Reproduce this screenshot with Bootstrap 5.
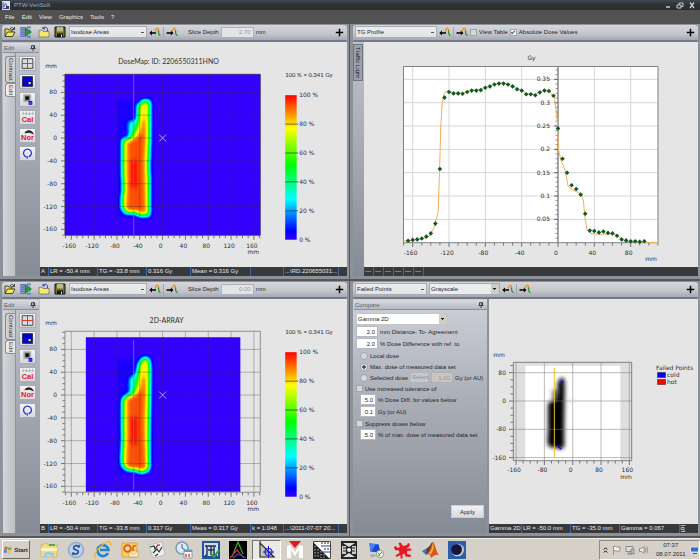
<!DOCTYPE html>
<html lang="en">
<head>
<meta charset="utf-8">
<meta name="viewport" content="width=device-width, initial-scale=1">
<title>PTW-VeriSoft</title>
<link href="https://cdn.jsdelivr.net/npm/bootstrap@5.3.0/dist/css/bootstrap.min.css" rel="stylesheet">
<style>
:root{--ui:"Liberation Sans",Arial,sans-serif;--plot:"DejaVu Sans",Verdana,sans-serif;--geo:Lato,"Century Gothic",sans-serif}
body{font:6px/10px var(--ui);color:#25262b;background:#595b5e}
svg{display:block}
button,select,input{font:inherit;color:inherit}
.title-bar{height:10px;background:linear-gradient(#3f4857,#303234 45%,#2c2d2f);color:#8fb0d0;padding:0 4px 0 2px}
.win-btn{width:8px;height:8px;color:#c6cbd2}
.menu-bar{height:14px;background:#525252;padding:0 5px;gap:7px}
.menu-bar a{color:#e8e8e8;text-decoration:none}
.panes{display:grid;grid-template-columns:1fr 1fr;grid-auto-rows:1fr}
.pane{background:#8d9299;border-bottom:2px solid #55575b;min-width:0}
.pane-l{padding:1px 2px 3px 2px;border-right:1px solid #55575b}
.pane-r{padding:1px 2px 3px 3px}
.tool-row{height:17px;padding:0 3px 1px 2px;border-radius:3px 3px 2px 2px;border-bottom:2px solid #747a85;background:linear-gradient(#d5d7dc,#c3c5cb 60%,#a5a9b3)}
.tool-row .btn,.win-btn,.tool-side .btn,.task .btn{border-radius:0;line-height:1}
.tool-gap{gap:2px}
.files{gap:4px;margin-right:1px}
.files .btn:nth-child(3){margin-left:2px}
.pick{appearance:none;border:1px solid #a9acb2;border-radius:0;height:12px;line-height:8px;padding:0 8px 0 1px;min-width:0;outline:0;
 background:linear-gradient(#55585e,#55585e) right 2px center/3px 1px no-repeat,linear-gradient(#ececec,#e3e3e5)}
.pick-solid{background:linear-gradient(#222,#222) right 3px top 4px/3px 1px no-repeat,linear-gradient(#222,#222) right 4px top 5px/1px 1px no-repeat,linear-gradient(#d0cdc5,#d0cdc5) right/8px 100% no-repeat,#ececee}
.pick-white{background-color:#fff;border-color:#c3c5ca;margin-bottom:1px}
.num{border:1px solid #b4b8bf;border-radius:0;padding:0 2px;text-align:right;height:11px;background:#fff;line-height:9px;min-width:0}
.num:disabled{background:#e4e4e6;color:#96989d;border-color:#aeb1b8}
.w-iso{width:78px}.w-tg{width:82px}.w-fail{width:72px}.w-gray{width:71px}.w-gamma{width:92px}
.w-depth{width:33px}.w-two{width:22px}.w-five{width:16px}
.slice{margin-left:8px}
.divider{width:1px;height:11px;background:#a2a5ac}
.plus{width:9px;height:9px}
.side-head{height:10px;margin:1px 1px 0 1px;padding:0 3px 0 1px;color:#5c616a;border-bottom:1px solid #8b9099;background:linear-gradient(#d9dbe0,#b5b9c2)}
.side{width:38px;flex:none;background:linear-gradient(#c5c7cf,#a3a8b2 45%,#868c96)}
.tab-strip{width:13px;margin-left:1px;background:linear-gradient(90deg,#d4d5d8,#bfc0c4);border-right:1px solid #8f939a;padding-top:3px}
.vtab{writing-mode:vertical-rl;border:1px solid #888c94;border-right:0;border-radius:3px 0 0 3px;background:#cfd0d4;color:#333;line-height:9px;padding:1px 0;width:10px;margin-left:2px}
.vtab.on{background:#ededee}
.tool-side{padding:3px 0 0 3px;gap:3px}
.tool-side .btn{width:17px;height:15px;padding:0;background:linear-gradient(#f4f4f5,#d6d8dc);border:1px solid #a7abb3;border-radius:1px}
.light-strip{width:11px;flex:none;background:linear-gradient(#c0c3cb,#858b95)}
.light-strip button{writing-mode:vertical-rl;border:1px solid #6f757f;background:#9ba1ac;line-height:8px;width:10px;padding:2px 0;margin-top:2px}
.sheet{background:#e5e5e5;min-width:0}
.sheet svg text{font:6px var(--plot);fill:#303030}
.sheet svg .geo{font:7px var(--geo)}
.sheet svg .geo-s{font:6px var(--geo)}
.status{height:9px;background:#37393d;color:#e6e8ea;line-height:9px;white-space:nowrap;overflow:hidden;flex:none}
.status span{border-right:1px solid #3a66a8;padding-left:1px;overflow:hidden;flex:none}
.c-id{width:9px}.c-val{width:49px}.c-dose{width:44px}.c-mean{width:60px}.c-k{width:33px}.c-file{width:55px}.c-dash{width:10px}.c-gam{width:33px}.c-gv{width:60px}
.compare{width:134px;flex:none;background:linear-gradient(#cdd0d7,#a9adb6 45%,#858b95);margin-right:2px}
.compare .side-head{margin-right:0}
.fields{padding:3px 3px 0 3px}
.line{height:11px;gap:2px;white-space:nowrap}
.line-in{height:11px;gap:2px;white-space:nowrap;margin-bottom:1px}
.tick{appearance:none;width:7px;height:7px;border:1px solid #9fa3aa;background:#d6d8dc;margin:0;flex:none;display:grid;place-items:center}
.tick:checked{background:#f1f2f4}
.tick[type=checkbox]:checked::after{content:"";width:2px;height:4px;border:solid #2f4f7c;border-width:0 1px 1px 0;transform:rotate(45deg)}
.tick[type=radio]{border-radius:50%;width:8px;height:8px}
.tick[type=radio]:checked{background:radial-gradient(#33506e 0 35%,#eceef1 45%)}
.indent{padding-left:4px}
.sel-btn{border:1px solid #b0b4bb;background:#c6c8cd;color:#8f939a;padding:0 1px;line-height:9px;width:19px}
.line .num{background:#c9c5be;width:22px}
.apply{width:33px;height:13px;border:1px solid #c9ccd2;background:linear-gradient(#f1f2f4,#d7dade);padding:0;margin:0 3px 15px auto;line-height:10px}
.task{height:22px;background:#d5d1c8;border-top:1px solid #efeee9;padding-left:2px;flex:none}
.start{width:28px;height:19px;border:1px solid;border-color:#fff #6d6a64 #6d6a64 #fff;background:#d5d1c8;font-weight:700;padding:0;gap:2px}
.launch{flex:0 1 436px;margin-left:5px}
.launch .btn{flex:1 1 0;height:20px;padding:0;border:0}
.launch .btn.on{border:1px solid;border-color:#77746e #fff #fff #77746e;background:#ebe9e4}
.tray{border:1px solid;border-color:#8f8c85 #fff #fff #8f8c85;height:20px;padding:0 0 0 3px;width:101px;gap:4px;line-height:9px}
</style>
<script src="https://cdn.jsdelivr.net/npm/bootstrap@5.3.0/dist/js/bootstrap.bundle.min.js"></script>
</head>
<body class="d-flex flex-column min-vh-100">

<svg width="0" height="0" class="position-absolute" aria-hidden="true">
<defs>
<filter id="jet" filterUnits="userSpaceOnUse" x="50" y="60" width="230" height="190" color-interpolation-filters="sRGB">
<feGaussianBlur stdDeviation="2"/>
<feComponentTransfer>
<feFuncR type="table" tableValues=".2 0 0 0 0 0 0 0 0 0 .05 .25 .5 .72 .9 1 1 1 1 1 1"/>
<feFuncG type="table" tableValues="0 0 .25 .5 .8 1 1 1 1 1 1 1 1 1 1 .95 .75 .55 .38 .2 0"/>
<feFuncB type="table" tableValues="1 1 1 1 1 1 .8 .6 .4 .2 0 0 0 0 0 0 0 0 0 0 0"/>
</feComponentTransfer>
</filter>
<filter id="soft" filterUnits="userSpaceOnUse" x="100" y="60" width="90" height="190"><feGaussianBlur stdDeviation="3.2"/></filter>
<linearGradient id="scale" x1="0" y1="1" x2="0" y2="0"><stop offset="0" stop-color="#3200ff"/><stop offset=".06" stop-color="#00f"/><stop offset=".28" stop-color="#0ff"/><stop offset=".52" stop-color="#0f0"/><stop offset=".77" stop-color="#ff0"/><stop offset="1" stop-color="#f00"/></linearGradient>
<path id="stepped" d="M138.500 107V104H142V100.500H150V145H149.500V158H149V174H149.500V216H138V213H125V210H122.500V195H123.500V178H123V158H123V139H131V136H134V132H136V128H138V116H138.500Z"/>
<path id="smooth" d="M138.500 112C140 104 143 100 147 100.500 151 102 150 112 150 130 149.500 160 149 180 149.500 211 147 217 139 217 136 213 131 214 126 213 123 209 121 200 124 190 123 172L123 145C124 136 131 140 133.500 136 136 132 138 128 138 118Z"/>
<path id="core" d="M143 120H145.500V140L144.500 158L145 184L146 212H127L128 184V142L134 139L139 136L142 130Z"/>
<symbol id="i-open" viewBox="0 0 12 12"><path d="M1 10V3h3l1 1h3v2" fill="#e8dc63" stroke="#222" stroke-width=".8"/><path d="M1 10.500 3.500 6H11L8.500 10.500Z" fill="#f4ea54" stroke="#222" stroke-width=".8"/><path d="M6 3c1-2 3-2 4 0M10.500 1v2.500H8" fill="none" stroke="#222" stroke-width=".8"/></symbol>
<symbol id="i-run" viewBox="0 0 12 12"><path d="M.5 1h10v10H.5z" fill="#9fabd8"/><path d="M1 1v10M3 1v10M5 1v10M7 1h4M7 11h4" stroke="#2a3aa0" stroke-dasharray="1.500 .7"/><path d="M5.500 2 11.500 6 5.500 10Z" fill="#1fa52c" stroke="#0a5c12" stroke-width=".5"/></symbol>
<symbol id="i-folder" viewBox="0 0 12 12"><path d="M1 11V4.500L4 4l1 1.500h6V11Z" fill="#f5e96a" stroke="#666" stroke-width=".7"/><path d="M5 2.500C7 0 10 1 9.500 5M5 .8v2h2" fill="none" stroke="#253a9c"/></symbol>
<symbol id="i-save" viewBox="0 0 12 12"><path d="M1 1h10v10H1z" fill="#77751c" stroke="#111"/><path d="M3 1h6v4.500H3z" fill="#b9bc8a"/><path d="M3 7.500h6V11H3z" fill="#151515"/><path d="M7 8.500h1V11H7z" fill="#ddd"/></symbol>
<symbol id="i-prev" viewBox="0 0 12 10"><path d="M.3 6 3 3.500V5.300H7V6.700H3V8.500Z" fill="#000"/><path d="M6 4.500C7.500 0 9.500 0 9.500 4" fill="none" stroke="#e6942a" stroke-width="1.300"/><path d="M9.500 3.500C9.500 7 10 8.500 11.500 8.500" fill="none" stroke="#31902c" stroke-width="1.300"/></symbol>
<symbol id="i-next" viewBox="0 0 12 10"><path d="M7.500 6 4.800 3.500V5.300H.5V6.700H4.800V8.500Z" fill="#000"/><path d="M6 4.500C7.500 0 9.500 0 9.500 4" fill="none" stroke="#e6942a" stroke-width="1.300"/><path d="M9.500 3.500C9.500 7 10 8.500 11.500 8.500" fill="none" stroke="#31902c" stroke-width="1.300"/></symbol>
<symbol id="i-pin" viewBox="0 0 6 6"><path d="M1.500.7h3V3.300M1.500.7V3.300M.5 3.500h5M3 3.500V6" fill="none" stroke="#222" stroke-width=".8"/><path d="M3.500.7h1v2.600h-1z" fill="#222"/></symbol>
<symbol id="i-plus" viewBox="0 0 8 8"><path d="M4 .7V7.300M.7 4H7.300" stroke="#000" stroke-width="1.300"/></symbol>
<symbol id="s-grid" viewBox="0 0 14 12"><path d="M2 1.500h10v9H2z" fill="#ddd" stroke="#444" stroke-width=".9"/><path d="M7 1.500v9M2 6h10" stroke="#e03030" stroke-width=".9"/></symbol>
<symbol id="s-blue" viewBox="0 0 14 12"><path d="M2.500 1.500h9v9h-9z" fill="#0000d8" stroke="#224"/><path d="M8 6.500h2v2H8z" fill="#ffe94a"/></symbol>
<symbol id="s-spot" viewBox="0 0 14 12"><path d="M3 1h7.500v7.500H3z" fill="#b4b4b4"/><path d="M4.500 2.500h4.500v4.500h-4.500z" fill="#555"/><path d="M5.500 3.500h2.500v2.500h-2.500z" fill="#000"/><path d="M8.500 8h2.500v2.500H8.500z" fill="#66f" stroke="#11d"/></symbol>
<symbol id="s-cal" viewBox="0 0 14 12"><path d="M3 .5v3M6 .5v3M9 .5v3M12 .5v3M2 2.500h11" stroke="#888" stroke-width=".5"/><text x="7" y="10.500" text-anchor="middle" style="font:bold 7px 'Liberation Sans',sans-serif" fill="#e8141c">Cal</text></symbol>
<symbol id="s-nor" viewBox="0 0 14 12"><path d="M4 4C6 0 11 0 13 5L9 3.500Z" fill="#222"/><text x="7" y="10.500" text-anchor="middle" style="font:bold 7px 'Liberation Sans',sans-serif" fill="#e8141c">Nor</text></symbol>
<symbol id="s-turn" viewBox="0 0 14 12"><path d="M5.500 9A3.700 3.700 0 1 1 8.500 9" fill="none" stroke="#2632d8" stroke-width="1.200"/><path d="M4.500 9h2.300v2" fill="none" stroke="#2632d8"/><path d="M9.800 7.600 8.200 9.200" stroke="#2632d8"/></symbol>
</defs>
</svg>

<header>
<div class="title-bar d-flex align-items-center justify-content-between">
<div class="d-flex align-items-center gap-1">
<svg width="8" height="9" viewBox="0 0 8 9"><path d="M0 0h8v9H0z" fill="#dfe3f0"/><path d="M1 1v6.500h6M2 6C3 1 4 2 4.500 5L7 6" fill="none" stroke="#4450a0"/><path d="M4 5h3v3H4z" fill="#3a3a70"/></svg>
<span>PTW-VeriSoft</span>
</div>
<div class="d-flex gap-1">
<button class="btn win-btn p-0 border-0" aria-label="Minimize"><svg width="8" height="8"><path d="M2 6h4" stroke="currentColor" stroke-width="1.500"/></svg></button>
<button class="btn win-btn p-0 border-0" aria-label="Restore"><svg width="8" height="8"><path d="M1 4h4v3H1zM3 4V2h4v3.500H5" fill="none" stroke="currentColor"/></svg></button>
<button class="btn win-btn p-0 border-0" aria-label="Close"><svg width="8" height="8"><path d="M2 1.500 6 7M6 1.500 2 7" stroke="currentColor" stroke-width="1.300"/></svg></button>
</div>
</div>
<nav class="menu-bar d-flex align-items-center">
<a href="#">File</a><a href="#">Edit</a><a href="#">View</a><a href="#">Graphics</a><a href="#">Tools</a><a href="#">?</a>
</nav>
</header>

<main class="panes flex-grow-1">

<section class="pane pane-l d-flex flex-column" data-map="A"></section>

<section class="pane pane-r d-flex flex-column">
<div class="tool-row tool-gap d-flex align-items-center">
<select class="pick w-tg" aria-label="Profile"><option>TG Profile</option></select>
<button class="btn p-0 border-0" aria-label="Previous"><svg width="12" height="10"><use href="#i-prev"/></svg></button>
<span class="divider"></span>
<button class="btn p-0 border-0" aria-label="Next"><svg width="12" height="10"><use href="#i-next"/></svg></button>
<input class="tick" type="checkbox" id="vt"><label for="vt">View Table</label>
<input class="tick" type="checkbox" id="ab" checked><label for="ab">Absolute Dose Values</label>
<button class="btn p-0 border-0 ms-auto" aria-label="Add"><svg class="plus"><use href="#i-plus"/></svg></button>
</div>
<div class="d-flex flex-grow-1">
<div class="light-strip"><button>Traffic Light</button></div>
<div class="sheet d-flex flex-column flex-grow-1">
<svg id="profile" class="w-100 flex-grow-1" viewBox="364 42 334 225"></svg>
<div class="status d-flex"><span class="c-dash">---</span><span class="c-dash">---</span><span class="c-dash">---</span><span class="c-dash">---</span><span class="c-dash">---</span><span class="c-dash">---</span></div>
</div>
</div>
</section>

<section class="pane pane-l d-flex flex-column" data-map="B"></section>

<section class="pane pane-r d-flex flex-column">
<div class="tool-row tool-gap d-flex align-items-center">
<select class="pick w-fail" aria-label="View"><option>Failed Points</option></select>
<select class="pick pick-solid w-gray" aria-label="Palette"><option>Grayscale</option></select>
<button class="btn p-0 border-0" aria-label="Previous"><svg width="12" height="10"><use href="#i-prev"/></svg></button>
<span class="divider"></span>
<button class="btn p-0 border-0" aria-label="Next"><svg width="12" height="10"><use href="#i-next"/></svg></button>
<button class="btn p-0 border-0 ms-auto" aria-label="Add"><svg class="plus"><use href="#i-plus"/></svg></button>
</div>
<div class="d-flex flex-grow-1">
<form class="compare d-flex flex-column">
<div class="side-head d-flex align-items-center justify-content-between"><span>Compare</span><svg width="6" height="6"><use href="#i-pin"/></svg></div>
<div class="fields d-flex flex-column">
<select class="pick pick-solid pick-white w-gamma" aria-label="Method"><option>Gamma 2D</option></select>
<div class="line-in d-flex align-items-center"><input class="num w-two" id="f1" value="2.0"><label for="f1">mm Distance- To- Agreement</label></div>
<div class="line-in d-flex align-items-center"><input class="num w-two" id="f2" value="2.0"><label for="f2">% Dose Difference with ref. to</label></div>
<div class="line d-flex align-items-center indent"><input class="tick" type="radio" name="ref" id="r1"><label for="r1">Local dose</label></div>
<div class="line d-flex align-items-center indent"><input class="tick" type="radio" name="ref" id="r2" checked><label for="r2">Max. dose of measured data set</label></div>
<div class="line d-flex align-items-center indent"><input class="tick" type="radio" name="ref" id="r3"><label for="r3">Selected dose</label><button type="button" class="sel-btn" disabled>Select</button><input class="num" id="f3" value="1.00" disabled><label for="f3">Gy (or AU)</label></div>
<div class="line d-flex align-items-center"><input class="tick" type="checkbox" id="k1"><label for="k1">Use increased tolerance of</label></div>
<div class="line-in d-flex align-items-center indent"><input class="num w-five" id="f4" value="5.0"><label for="f4">% Dose Diff. for values below</label></div>
<div class="line-in d-flex align-items-center indent"><input class="num w-five" id="f5" value="0.1"><label for="f5">Gy (or AU)</label></div>
<div class="line d-flex align-items-center"><input class="tick" type="checkbox" id="k2"><label for="k2">Suppress doses below</label></div>
<div class="line-in d-flex align-items-center indent"><input class="num w-five" id="f6" value="5.0"><label for="f6">% of max. dose of measured data set</label></div>
</div>
<button type="button" class="apply mt-auto">Apply</button>
</form>
<div class="sheet d-flex flex-column flex-grow-1">
<svg id="gamma" class="w-100 flex-grow-1" viewBox="489 299 209 225"></svg>
<div class="status d-flex"><span class="c-gam">Gamma 2D</span><span class="c-val">LR = -50.0 mm</span><span class="c-val">TG = -35.0 mm</span><span class="c-gv">Gamma = 0.067</span><svg width="6" height="9" viewBox="0 0 6 9"><path d="M.5 1.500h5M1 3.500h3v2H1zM1 7.500h4L3 5.500" fill="none" stroke="#ccc" stroke-width=".8"/></svg></div>
</div>
</div>
</section>
</main>

<footer class="task d-flex align-items-center">
<button class="start d-flex align-items-center justify-content-center"><svg width="8" height="8" viewBox="0 0 8 8"><path d="M.8 1C2 .2 3 .5 3.700 1L3 3.800C2 3.200 1 3.300 0 3.900Z" fill="#e8562a"/><path d="M4.300 1.200C5.500 1.800 6.500 1.600 7.800 1L7 3.900C6 4.500 4.800 4.400 3.600 4Z" fill="#6fb43c"/><path d="M0 4.500C1 3.900 2 4 2.900 4.500L2.200 7.200C1.500 6.700.5 6.700-.5 7.200Z" fill="#3d83d6"/><path d="M3.400 4.700C4.500 5.200 5.500 5.200 6.800 4.600L6 7.400C5 7.900 3.700 7.900 2.700 7.400Z" fill="#f4c531"/></svg>Start</button>
<div class="launch d-flex align-items-center">
<button class="btn d-flex align-items-center justify-content-center" aria-label="Explorer"><svg width="18" height="18" viewBox="0 0 18 18"><path d="M1 4 7 2l1 2h9v12H1Z" fill="#f1dc85" stroke="#c4a94e" stroke-width=".6"/><path d="M9 3h6v2H9z" fill="#59a84e"/><path d="M1 7h16v3H1z" fill="#fff3bc"/><path d="M4 16v-4q5-3 10 0v4h-3v-2H7v2Z" fill="#9dcbea"/></svg></button>
<button class="btn d-flex align-items-center justify-content-center" aria-label="Sync"><svg width="18" height="18" viewBox="0 0 18 18"><circle cx="9" cy="9" r="7.800" fill="#a9bfe0" stroke="#8ba5d2"/><circle cx="9" cy="9" r="6" fill="#c3d2ea"/><path d="M12 5.500C9 3.500 5.500 5.500 7 8L11 9.800C12.500 12 9 14 6 12.500" fill="none" stroke="#264f9c" stroke-width="1.600"/><path d="M12.800 3.500v3.500l-3-1ZM5.200 14.500v-3.500l3 1Z" fill="#264f9c"/></svg></button>
<button class="btn d-flex align-items-center justify-content-center" aria-label="Internet Explorer"><svg width="18" height="18" viewBox="0 0 18 18"><path d="M14 12A5.500 5.500 0 1 1 14.500 9H6" fill="none" stroke="#1f83cf" stroke-width="2.600"/><path d="M2 16C-1 17 1 10 7 5S18-1 16 5" fill="none" stroke="#efb52b" stroke-width="1.300"/></svg></button>
<button class="btn d-flex align-items-center justify-content-center" aria-label="Outlook"><svg width="18" height="18" viewBox="0 0 18 18"><path d="M1 2h15v14H1z" fill="#f8d06a" stroke="#eaa235"/><path d="M8 10h9v6H8z" fill="#fff1c2" stroke="#d98a1c" stroke-width=".6"/><path d="m8 10 4.500 3.500L17 10" fill="none" stroke="#d98a1c" stroke-width=".6"/><circle cx="6.500" cy="7.500" r="3.300" fill="#fbe7b0" stroke="#d9600f" stroke-width="1.900"/><path d="M15 5q-3-1-3 2v3" fill="none" stroke="#d9600f" stroke-width="1.600"/></svg></button>
<button class="btn d-flex align-items-center justify-content-center" aria-label="Notes"><svg width="18" height="18" viewBox="0 0 18 18"><path d="m1 4 13-3 3 13-12 3Z" fill="#eee" stroke="#aaa" stroke-width=".6"/><path d="m2 6 4-1 1 3 3-4M5 12l4-4 2 3 3-5M7 15l3-2" fill="none" stroke="#333" stroke-width="1.200"/><path d="m9 4 3 0" stroke="#d33" stroke-width="1.300"/></svg></button>
<button class="btn d-flex align-items-center justify-content-center" aria-label="Schedule"><svg width="18" height="18" viewBox="0 0 18 18"><circle cx="7" cy="7" r="6" fill="#dce9f6" stroke="#7896b8" stroke-width="1.500"/><path d="M7 3v4l3 2" fill="none" stroke="#395a83"/><path d="M9 9h8v8H9z" fill="#fff" stroke="#768bab" stroke-width=".8"/><path d="M9 9h8v2H9z" fill="#6d93cb"/><path d="M11 13v3M14 13v3" stroke="#db4625" stroke-width="1.400"/></svg></button>
<button class="btn d-flex align-items-center justify-content-center" aria-label="Patient tool"><svg width="18" height="18" viewBox="0 0 18 18"><path d="M0 0h18v18H0z" fill="#26529c"/><path d="M2 2h14v13H2z" fill="#cfdcf0"/><path d="M3 5h11M5 5v9l-2 1M9 5v9M12 5v9h3M6 9h6" fill="none" stroke="#1c2c50" stroke-width="1.400"/><path d="m9 13 3 3 5-7" fill="none" stroke="#22a637" stroke-width="2"/></svg></button>
<button class="btn d-flex align-items-center justify-content-center" aria-label="Spectrum"><svg width="18" height="18" viewBox="0 0 18 18"><path d="M0 0h18v18H0z" fill="#000"/><path d="M3 16 9 1l5 12" fill="none" stroke="#2db52d" stroke-width="1.200"/><path d="M1 17 8 9l7 8" fill="none" stroke="#e02222" stroke-width="1.200"/><path d="m4 17 5-4 8 4" fill="none" stroke="#3049e8" stroke-width="1.200"/></svg></button>
<button class="btn on d-flex align-items-center justify-content-center" aria-label="VeriSoft"><svg width="18" height="18" viewBox="0 0 18 18"><path d="M2 2v14h14Z" fill="#c6c6c6"/><path d="M2 0v16h15M2 2 16 16" fill="none" stroke="#222" stroke-width="1.100"/><circle cx="10.500" cy="11" r="3.500" fill="none" stroke="#2222d8" stroke-width="1.200"/><path d="M10.500 5v12M5 11h11" stroke="#2222d8"/></svg></button>
<button class="btn d-flex align-items-center justify-content-center" aria-label="Measure"><svg width="18" height="18" viewBox="0 0 18 18"><path d="M1 17V5l3-1 5 7 5-7 3 1v12h-4V9l-4 6-4-6v8Z" fill="#fff"/><path d="M3 0h12L9 7Z" fill="#e11818"/></svg></button>
<button class="btn d-flex align-items-center justify-content-center" aria-label="Matrix"><svg width="18" height="18" viewBox="0 0 18 18"><path d="M0 0h18v18H0z" fill="#fff"/><path d="M0 1 17 18H0z" fill="#222"/><path d="M2 5v12M5 8v9M8 10v7M11 13v4" stroke="#bbb" stroke-dasharray="1.500 1.500"/><path d="M8 5h10M8 11h10" stroke="#2b3c9c"/><path d="M8 2h9M11 8h7" stroke="#222" stroke-dasharray="2 1"/><path d="M.5.500h17v17H.5z" fill="none" stroke="#222" stroke-width=".8"/></svg></button>
<button class="btn d-flex align-items-center justify-content-center" aria-label="Collimator"><svg width="18" height="18" viewBox="0 0 18 18"><path d="M1 0h16v18H1z" fill="#252525"/><path d="M3 2h12L9 6ZM3 16h12L9 12Z" fill="#ddd"/><path d="M2 5h4v8H2zM12 5h4v8h-4z" fill="#ccc"/><path d="M3 7h3M3 10h3M12 7h3M12 10h3" stroke="#222"/><circle cx="9" cy="9" r="2" fill="#eee"/></svg></button>
<button class="btn d-flex align-items-center justify-content-center" aria-label="Remote"><svg width="18" height="18" viewBox="0 0 18 18"><path d="m2 2 10 1 2 9-11-1Z" fill="#1c48d0" stroke="#dfe7f8" stroke-width=".7"/><path d="m2 2 7 1-5 8Z" fill="#4d7ef0"/><path d="m4 13 6 1-3 2H3z" fill="#aaa"/><circle cx="13" cy="13" r="3.700" fill="#e8f0e6" stroke="#8da48a"/><path d="m11 12 2 2-2 1M15 11l-2 2" stroke="#2c9a35" fill="none"/></svg></button>
<button class="btn d-flex align-items-center justify-content-center" aria-label="Gecko"><svg width="20" height="18" viewBox="0 0 20 18"><path d="M7 6 5.500 2 7.500 1.500 10 5 14 4l1-2 2 1-1 3-3 1.500 5 0 .5 2L14 10l0 3 4 1-.5 2-5-.5-1-3-2 1 0 4-2 0 0-3.500-4 2-1-1.800 4-2.200-.5-2.500L2 9 1 6l2-1 1.500 2Z" fill="#ec1420"/></svg></button>
<button class="btn d-flex align-items-center justify-content-center" aria-label="MATLAB"><svg width="18" height="18" viewBox="0 0 18 18"><path d="m1 10 5-3 3 3-4 4Z" fill="#3b7fb5"/><path d="M6 7C9 6 10 1 12 1l-3 9-4 4Z" fill="#7c3328"/><path d="M12 1c2 1 3 10 6 13-3-1-5 0-8 3l-1-3-3-1C10 10 10 4 12 1Z" fill="#d9561c"/><path d="M12 2c1 3 1 8-3 12l-1-2C11 9 11 5 12 2Z" fill="#f6b53b"/></svg></button>
<button class="btn d-flex align-items-center justify-content-center" aria-label="Eclipse"><svg width="18" height="18" viewBox="0 0 18 18"><path d="M0 0h18v18H0z" fill="#2d5ea6"/><circle cx="9.500" cy="9" r="6.300" fill="#c6d3ea"/><circle cx="8.500" cy="8.500" r="5.500" fill="#15163f"/><path d="m13.500 12 2-1M14 7l2-1" stroke="#f3b96a"/></svg></button>
</div>
<div class="tray d-flex align-items-center ms-auto">
<svg width="5" height="8" viewBox="0 0 5 8"><path d="M.8 3.500 2.500 1.800l1.700 1.700M.8 6.500l1.700-1.700 1.700 1.700" fill="none" stroke="#111"/></svg>
<svg width="9" height="10" viewBox="0 0 9 10"><path d="M1.500 1v9M1.500 1.500C4 .5 5 3 8 2v4C5 7 4 5 1.500 6" fill="#f2f1ee" stroke="#888" stroke-width=".9"/></svg>
<svg width="10" height="10" viewBox="0 0 10 10"><path d="M1 1.500h7v5H1zM4 6.500V9M2 9h5" fill="#ddd" stroke="#888"/><path d="M6 4h3v5H6z" fill="#bbb" stroke="#777" stroke-width=".7"/></svg>
<svg width="9" height="10" viewBox="0 0 9 10"><path d="M.5 3.500h2L5 1.500v7L2.500 6.500h-2Z" fill="#eee" stroke="#777" stroke-width=".8"/><path d="M6.300 3q1.200 2 0 4M7.700 1.500q2 3.500 0 7" fill="none" stroke="#888" stroke-width=".8"/></svg>
<div class="text-center ms-1">07:37<br>08.07.2011</div>
<svg width="9" height="8" viewBox="0 0 9 8"><path d="M.5 1h8v5h-8z" fill="#2f6fd0" stroke="#dde"/><path d="M3 7.500h4" stroke="#555"/></svg>
</div>
</footer>

<script>
const line = (x1, y1, x2, y2, c, w = 1) => `<path d="M${x1} ${y1}L${x2} ${y2}" stroke="${c}" stroke-width="${w}" fill="none"/>`;
const label = (x, y, t, a = 'middle', c = '') => `<text x="${x}" y="${y}" text-anchor="${a}" class="${c}">${t}</text>`;

/* Dose map: isodose areas with millimetre axes and a percentage scale. */
function doseMap(id) {
  const X = v => 163 + v * .5725, Y = v => 138 - v * .5725, b = id === 'B';
  const area = b ? [86, 80, 155, 155] : [65, 74, 196, 161.5];
  let s = `<clipPath id="clip${id}"><rect x="${area[0]}" y="${area[1]}" width="${area[2]}" height="${area[3]}"/></clipPath>
<g clip-path="url(#clip${id})"><g filter="url(#jet)"><path d="M40 50h250v210H40z" fill="#000"/>
<path d="M117 100h36v117h-36z" fill="#060606"/><path d="M${b ? '130 121l8-5v22h-8z' : '129 121h9v17h-9z'}" fill="#505050"/>
<use href="#${b ? 'smooth' : 'stepped'}" fill="#c0c0c0"/><use href="#core" fill="#ebebeb"/><path d="M131 160h6v28h-6z" fill="#fff"/></g></g>`;
  for (let v = -160; v <= 160; v += 40) {
    s += line(X(v), 74, X(v), 235.5, 'rgba(50,50,50,.4)', .8);
    s += label(X(v) - 2, 248, v);
    if (v <= 80) { s += line(65, Y(v), 261, Y(v), 'rgba(50,50,50,.4)', .8); s += label(57, Y(v) + 2, v, 'end'); }
  }
  for (let v = -170; v <= 170; v += 10) {
    s += line(X(v), 236, X(v), v % 40 ? 238.5 : 240, '#555', .8);
    if (v <= 110) s += line(65, Y(v), v % 40 ? 62.5 : 61, Y(v), '#555', .8);
  }
  s += `<path d="M65 74H261V235.500H65Z" fill="none" stroke="${b ? '#777' : '#335'}" stroke-width=".8"/>`;
  s += b ? line(134, 83, 134, 233, 'rgba(70,150,205,.75)') : line(134, 74, 134, 235, 'rgba(190,100,125,.7)');
  s += `<path d="M159.500 134.500l7 7M166.500 134.500l-7 7" stroke="#c9c9e8" stroke-width=".8"/>`;
  s += label(b ? 167 : 169, b ? 66 : 64, b ? '2D-ARRAY' : 'DoseMap: ID: 2206550311HNO', 'middle', 'geo');
  s += label(51, 68, 'mm') + label(254, 254, 'mm') + label(286, 77, '100 % = 0.341 Gy', 'start', 'geo-s');
  s += `<rect x="286" y="95" width="11.500" height="145" fill="url(#scale)"/>`;
  for (let p = 0; p <= 100; p += 20) {
    const y = 240 - p * 1.45;
    if (p % 100) s += line(286, y, 299, y, '#333', .7);
    s += label(300, y + 2, p + ' %', 'start');
  }
  return s;
}

function mapPane(el) {
  const id = el.dataset.map, b = id === 'B';
  const btn = (i, n) => `<button class="btn p-0 border-0" aria-label="${n}"><svg width="12" height="12"><use href="#i-${i}"/></svg></button>`;
  const side = [['grid', 'Grid'], ['blue', 'Area'], ['spot', 'Point'], ['cal', 'Calibrate'], ['nor', 'Normalize'], ['turn', 'Rotate']]
    .map(([i, n]) => `<button class="btn d-flex align-items-center justify-content-center" aria-label="${n}"><svg width="15" height="13"><use href="#s-${i}"/></svg></button>`).join('');
  el.innerHTML = `<div class="tool-row tool-gap d-flex align-items-center">
<div class="files d-flex">${btn('open', 'Open')}${btn('run', 'Run')}${btn('folder', 'Folder')}${btn('save', 'Save')}</div>
<select class="pick w-iso" aria-label="Display"><option>Isodose Areas</option></select>
<button class="btn p-0 border-0" aria-label="Previous"><svg width="12" height="10"><use href="#i-prev"/></svg></button><span class="divider"></span>
<button class="btn p-0 border-0" aria-label="Next"><svg width="12" height="10"><use href="#i-next"/></svg></button>
<label class="slice" for="d${id}">Slice Depth</label><input class="num w-depth" id="d${id}" value="${b ? '0.00' : '2.70'}" disabled><span>mm</span>
<button class="btn p-0 border-0 ms-auto" aria-label="Add"><svg class="plus"><use href="#i-plus"/></svg></button></div>
<div class="d-flex flex-grow-1"><div class="side d-flex flex-column">
<div class="side-head d-flex align-items-center justify-content-between"><span>Edit</span><svg width="6" height="6"><use href="#i-pin"/></svg></div>
<div class="d-flex flex-grow-1"><div class="tab-strip d-flex flex-column"><button class="vtab">Contrast</button><button class="vtab on">Edit</button></div>
<div class="tool-side d-flex flex-column">${side}</div></div></div>
<div class="sheet d-flex flex-column flex-grow-1"><svg class="w-100 flex-grow-1" viewBox="40 42 308 225">${doseMap(id)}</svg>
<div class="status d-flex"><span class="c-id">${id}</span><span class="c-val">LR = -50.4 mm</span><span class="c-val">TG = -33.8 mm</span><span class="c-dose">${b ? '0.317' : '0.316'} Gy</span>
<span class="c-mean">${b ? 'Meas = 0.317' : 'Mean = 0.316'} Gy</span><span class="c-k">${b ? 'k = 1.048' : ''}</span><span class="c-file">${b ? '...\\2011-07-07 20...' : '...\\RD.220655031...'}</span></div></div></div>`;
}
document.querySelectorAll('[data-map]').forEach(mapPane);

/* Dose profile: measured points over the calculated curve. */
(function () {
  const X = v => 558 + v * .9083, Y = v => 242.7 - v * 466.7;
  const dose = [.004,.006,.007,.009,.013,.02,.041,.158,.311,.323,.32,.32,.319,.323,.326,.326,.327,.332,.335,.339,.341,.341,.339,.335,.329,.326,.318,.318,.316,.322,.326,.325,.315,.245,.18,.15,.123,.115,.103,.062,.026,.025,.022,.024,.021,.02,.015,.007,.005,.003,.003,.002,.003];
  let s = `<path d="M403.500 66.500H658V242.700H403.500Z" fill="#fff"/>`;
  for (let v = -160; v <= 80; v += 40) s += line(X(v), 66.5, X(v), 242.7, '#d6d6d6', 1) + label(X(v) - 2, 255, v);
  for (let i = 1; i <= 7; i++) s += line(403.5, Y(i * .05), 658, Y(i * .05), '#d6d6d6', 1) + label(550, Y(i * .05) + 2, +(i * .05).toFixed(2), 'end') + line(554, Y(i * .05), 558, Y(i * .05), '#555', .8);
  for (let v = -170; v <= 110; v += 10) s += line(X(v), 242.7, X(v), v % 40 ? 245.5 : 247, '#555', .8);
  for (let i = 1; i < 38; i++) s += line(555.5, Y(i / 100), 558, Y(i / 100), '#666', .7);
  s += line(558, 66.5, 558, 242.7, '#777', 1.2) + `<path d="M403.500 66.500H658V242.700H403.500Z" fill="none" stroke="#808080"/>`;
  const g = [[-165, .004], [-150, .008], [-142, .013], [-137, .03], [-132, .065], [-130.5, .15], [-129, .25], [-127.5, .3], [-125.5, .318], [-123, .325]];
  dose.forEach((d, i) => { const v = -165 + i * 5; if (v > -121 && v < -6) g.push([v, d + .001]); });
  g.push([-4, .31], [-2, .28], [-.5, .255], [.5, .2], [3, .178], [7, .16], [9, .145], [11, .122], [15, .114], [25, .105], [28, .09], [30, .05], [32, .027], [36, .02], [45, .018], [60, .019], [66, .014], [72, .004], [85, .001], [110, .0005]);
  s += `<path d="M403.500 240.800L${g.map(p => X(p[0]).toFixed(1) + ' ' + Y(p[1]).toFixed(1)).join('L')}" fill="none" stroke="#f5ae58" stroke-linejoin="round"/>`;
  dose.forEach((d, i) => { s += `<path d="M${X(-165 + i * 5).toFixed(1)} ${(Y(d) - 2.3).toFixed(1)}l2.300 2.300-2.300 2.300-2.300-2.300z" fill="#0e5a26"/>`; });
  s += label(531.5, 60, 'Gy') + label(651, 261, 'mm');
  document.getElementById('profile').innerHTML = s;
})();

/* Gamma map: failed points over the grayscale dose. */
(function () {
  const X = v => 572.7 + v * .354, Y = v => 401 - v * .354;
  let s = `<path d="M513.300 362.300H631.700V460.700H513.300Z" fill="#dedede"/><path d="M525.300 365.700h95v95h-95z" fill="#fff"/>
<g transform="translate(572.700 401) scale(.618) translate(-163 -138)"><g filter="url(#soft)"><path d="M130 120h8v18h-8z" fill="#777"/><use href="#smooth" fill="#000"/></g></g>`;
  for (let v = -160; v <= 160; v += 80) {
    s += line(X(v), 362.3, X(v), 460.7, 'rgba(120,120,120,.5)') + label(X(v) - 2, 472, v);
    if (v <= 80) s += line(513.3, Y(v), 631.7, Y(v), 'rgba(120,120,120,.5)') + label(506, Y(v) + 2, v, 'end');
  }
  for (let v = -160; v <= 160; v += 20) {
    s += line(X(v), 460.7, X(v), v % 80 ? 463.5 : 465, '#555', .8);
    if (v <= 100) s += line(513.3, Y(v), v % 80 ? 510.5 : 509, Y(v), '#555', .8);
  }
  s += `<path d="M513.300 362.300H631.700V460.700H513.300Z" fill="none" stroke="#808080"/>` + line(554.3, 368, 554.3, 458, '#f0c818');
  s += `<path d="M569 397.500l7 7M576 397.500l-7 7" stroke="#e9dfae" stroke-width=".7"/><path d="M561 380.700h2.200v2.200H561zM558 446h2v2h-2zM559.500 447.500h2v2h-2z" fill="#11f"/>`;
  s += label(499, 357, 'mm') + label(626, 479, 'mm') + label(656, 370, 'Failed Points', 'start');
  s += `<path d="M657.500 372.500h8v5h-8z" fill="#00f" stroke="#222" stroke-width=".5"/><path d="M657.500 379.500h8v5h-8z" fill="#f00" stroke="#222" stroke-width=".5"/>` + label(667, 377, 'cold', 'start') + label(667, 384, 'hot', 'start');
  document.getElementById('gamma').innerHTML = s;
})();
</script>
</body>
</html>
